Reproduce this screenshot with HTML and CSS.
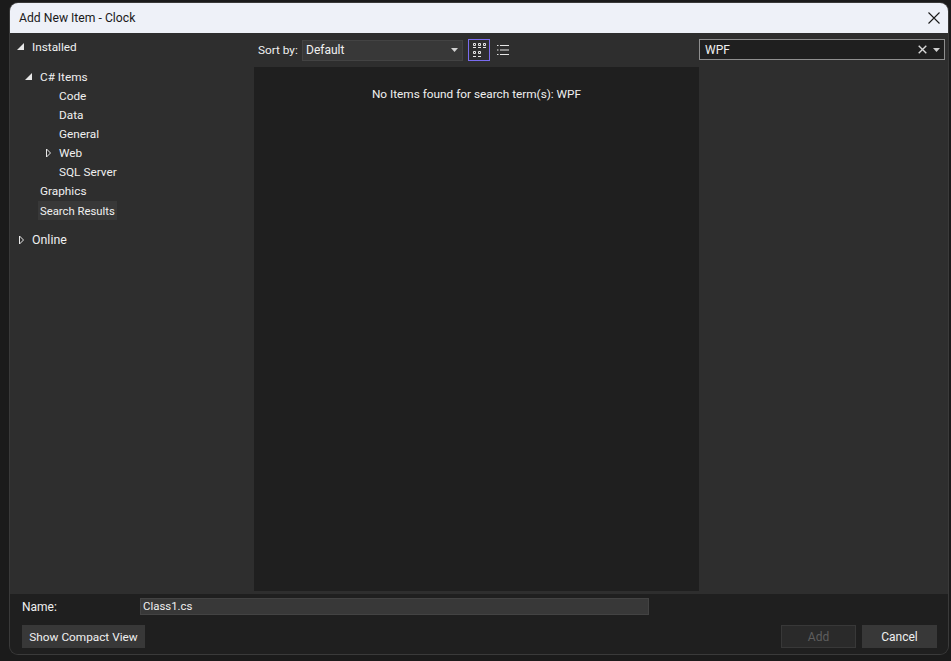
FILE: index.html
```html
<!DOCTYPE html>
<html lang="en">
<head>
<meta charset="utf-8">
<title>Add New Item - Clock</title>
<link rel="stylesheet" href="styles.css">
</head>
<body>
<div class="window">
  <header class="titlebar">
    <span class="title">Add New Item - Clock</span>
    <svg class="close" width="12" height="12" viewBox="0 0 12 12"><path d="M.5.5l11 11M11.500.5l-11 11" stroke="#1a1a1a" stroke-width="1.1" fill="none"/></svg>
  </header>
  <div class="main">
    <nav class="sidebar">
      <div class="row top"><svg class="arrow open" width="7" height="7" viewBox="0 0 7 7"><path d="M7 0v7H0z" fill="#e8e8e8"/></svg><span>Installed</span></div>
      <div class="tree">
        <div class="row lvl1"><svg class="arrow open" width="7" height="7" viewBox="0 0 7 7"><path d="M7 0v7H0z" fill="#e8e8e8"/></svg><span>C# Items</span></div>
        <div class="row lvl2">Code</div>
        <div class="row lvl2">Data</div>
        <div class="row lvl2">General</div>
        <div class="row lvl2 web"><svg class="arrow" width="7" height="10" viewBox="0 0 7 10"><path d="M1.500 1l4 4-4 4z" fill="none" stroke="#e8e8e8"/></svg><span>Web</span></div>
        <div class="row lvl2">SQL Server</div>
        <div class="row lvl1b">Graphics</div>
        <div class="row lvl1b sel-row"><span class="selected">Search Results</span></div>
      </div>
      <div class="row top online"><svg class="arrow" width="7" height="10" viewBox="0 0 7 10"><path d="M1.500 1l4 4-4 4z" fill="none" stroke="#e8e8e8"/></svg><span class="online-text">Online</span></div>
    </nav>
    <section class="center">
      <div class="toolbar">
        <span class="sortlabel">Sort by:</span>
        <div class="combo"><span>Default</span><svg width="7" height="4" viewBox="0 0 7 4"><path d="M0 0h7L3.500 4z" fill="#d0d0d0"/></svg></div>
        <button class="viewbtn active" aria-label="Medium icons">
          <svg width="13" height="14" viewBox="0 0 13 14" fill="none" stroke="#e6e6e6"><path d="M.5.5h2v2h-2zM5.500.5h2v2h-2zM10.500.5h2v2h-2zM0 4.500h3M5 4.500h3M10 4.500h3M.5 8.500h2v2h-2zM5.500 8.500h2v2h-2zM0 13.500h3M5 13.500h3"/></svg>
        </button>
        <button class="viewbtn" aria-label="List">
          <svg width="12" height="10" viewBox="0 0 12 10" fill="none" stroke="#e6e6e6"><path d="M0 .5h1.500M3 .5h9M0 5h1.500M3 5h9M0 9.500h1.500M3 9.500h9"/></svg>
        </button>
      </div>
      <div class="results">No Items found for search term(s): WPF</div>
    </section>
    <aside class="right">
      <div class="search">
        <span class="query">WPF</span>
        <svg width="9" height="9" viewBox="0 0 9 9"><path d="M.7.7l7.600 7.600M8.300.7L.7 8.300" stroke="#d8d8d8" stroke-width="1.400" fill="none"/></svg>
        <svg width="7" height="4" viewBox="0 0 7 4"><path d="M0 0h7L3.500 4z" fill="#d0d0d0"/></svg>
      </div>
    </aside>
  </div>
  <footer class="footer">
    <div class="namerow"><label class="namelabel">Name:</label><div class="nameinput">Class1.cs</div></div>
    <div class="btnrow">
      <button class="btn compact">Show Compact View</button>
      <span class="spacer"></span>
      <button class="btn add" disabled>Add</button>
      <button class="btn cancel">Cancel</button>
    </div>
  </footer>
</div>
</body>
</html>
```
FILE: styles.css
```css
* { box-sizing: border-box; }
html, body { margin: 0; height: 100%; }
body {
  background: #1b1b1b;
  padding: 3px 3px 7px 10px;
  font-family: Roboto, "Noto Sans", sans-serif;
  font-size: 12px;
  color: #f0f0f0;
  overflow: hidden;
}
.window {
  height: 651px;
  display: flex;
  flex-direction: column;
  border-radius: 8px;
  overflow: hidden;
  background: #2e2e2e;
  box-shadow: 0 0 0 1px #3a3a3a;
}
.titlebar {
  height: 30px;
  flex: none;
  background: #eef1f8;
  color: #1a1a1a;
  display: flex;
  align-items: center;
  justify-content: space-between;
  padding: 0 8px 1px 9px;
}
.title { font-size: 12.2px; }
.main { height: 561px; flex: none; display: flex; }
.sidebar { width: 244px; flex: none; padding-top: 5px; }
.row { height: 19px; padding-bottom: 2px; display: flex; align-items: center; white-space: nowrap; position: relative; font-size: 11.8px; }
.arrow { position: absolute; }
.top { padding-left: 22px; }
.top .arrow { left: 7px; }
.online { margin-top: 11px; }
.online .arrow { left: 8px; }
.online-text { font-size: 12.400px; }
.tree { margin-top: 11px; }
.lvl1 { padding-left: 30px; }
.lvl1 .arrow { left: 15px; }
.lvl1b { padding-left: 30px; }
.lvl2 { padding-left: 49px; }
.web .arrow { left: 35px; }
.sel-row { padding-bottom: 0; }
.selected { background: #383838; margin-left: -2px; padding: 1px 2px 0; height: 19px; line-height: 19px; font-size: 11.3px; }
.center { width: 445px; flex: none; display: flex; flex-direction: column; }
.toolbar { height: 34px; flex: none; display: flex; align-items: center; padding: 0 0 0 4px; }
.sortlabel { width: 44px; flex: none; font-size: 11.8px; }
.combo {
  width: 161px; height: 21px; margin-right: 5px; flex: none;
  background: #383838; border: 1px solid #434343;
  display: flex; align-items: center; justify-content: space-between;
  padding: 0 4px 0 3px;
}
.viewbtn {
  width: 22px; height: 22px; padding: 0;
  background: transparent; border: 1px solid transparent;
  display: flex; align-items: center; justify-content: center;
  margin-right: 2px;
}
.viewbtn.active { border-color: #7a6cf0; }
.results { height: 524px; flex: none; background: #1f1f1f; text-align: center; padding-top: 20px; font-size: 11.8px; line-height: 15px; }
.right { flex: 1; padding: 6px 3px 0 0; }
.search {
  height: 21px;
  background: #1f1f1f; border: 1px solid #8f8f8f;
  display: flex; align-items: center; gap: 6px;
  padding: 0 4px 0 5px;
  width: 246px;
}
.query { flex: 1; }
.footer { flex: 1; background: #1f1f1f; padding: 4px 11px 0 12px; }
.namerow { display: flex; align-items: center; height: 17px; }
.namelabel { width: 118px; }
.nameinput { width: 509px; height: 17px; background: #383838; border: 1px solid #434343; padding-left: 2px; line-height: 15px; font-size: 11.4px; }
.btnrow { display: flex; gap: 6px; margin-top: 10px; }
.spacer { flex: 1; }
.btn { height: 23px; font: inherit; color: #f0f0f0; background: #383838; border: 0; padding: 0; width: 75px; }
.compact { width: 123px; font-size: 11.8px; }
.add { background: #2a2a2a; border: 1px solid #383838; color: #5e5e5e; }
```
